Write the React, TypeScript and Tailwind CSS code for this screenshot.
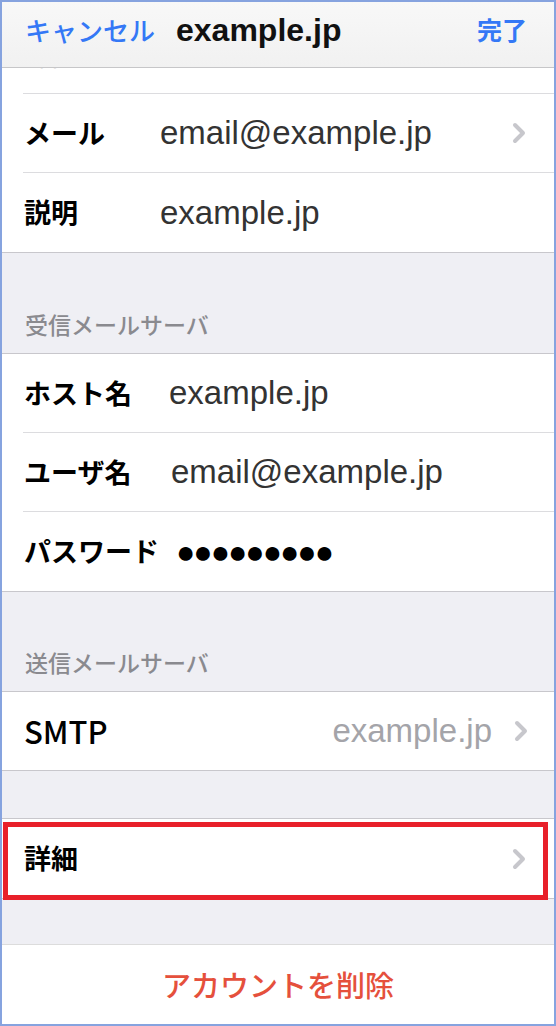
const jp = { fontFamily: '"Noto Sans CJK JP", sans-serif' };
const latin = { fontFamily: '"Liberation Sans", Arial, sans-serif' };

function Chevron() {
  return (
    <svg width="16" height="24" viewBox="0 0 16 24" className="shrink-0">
      <path
        d="M4 4 L12 12 L4 20"
        fill="none"
        stroke="#c7c7cc"
        strokeWidth="4"
        strokeLinecap="round"
        strokeLinejoin="round"
      />
    </svg>
  );
}

type RowProps = {
  label: string;
  labelW: number;
  value?: React.ReactNode;
  chevron?: boolean;
  last?: boolean;
};

const labelWidths: Record<number, string> = {
  136: "w-[136px]",
  145: "w-[145px]",
  147: "w-[147px]",
  152: "w-[152px]",
};

function Row({ label, labelW, value, chevron, last }: RowProps) {
  return (
    <div className="bg-white pl-[21px]">
      <div
        className={
          "flex h-[79px] items-center pl-[1px] pr-[27px] " +
          (last ? "" : "border-b border-[#dcdcdf]")
        }
      >
        <div
          className={"shrink-0 text-[27px] font-bold text-black " + labelWidths[labelW]}
          style={jp}
        >
          {label}
        </div>
        <div className="flex-1 text-[33px] text-[#333]" style={latin}>
          {value}
        </div>
        {chevron && <Chevron />}
      </div>
    </div>
  );
}

function SectionGap({ h, title }: { h: string; title?: string }) {
  return (
    <div className={"flex items-end bg-[#efeff4] pl-[23px] pb-[12px] " + h}>
      {title && (
        <span className="text-[23px] font-medium text-[#8a8a8f]" style={jp}>
          {title}
        </span>
      )}
    </div>
  );
}

export default function App() {
  return (
    <div className="h-[1026px] w-[556px] overflow-hidden border-2 border-[#86a3df] bg-white">
      {/* nav bar */}
      <div className="flex h-[66px] items-center border-b border-[#c6c6c8] bg-gradient-to-b from-[#f8f8f8] to-[#f1f1f1] pb-[10px] pl-[23px] pr-[27px]">
        <span className="text-[26px] font-medium text-[#3478f6]" style={jp}>
          キャンセル
        </span>
        <span className="ml-[21px] text-[32px] font-bold text-[#111]" style={latin}>
          example.jp
        </span>
        <span className="ml-auto text-[25px] font-bold text-[#3478f6]" style={jp}>
          完了
        </span>
      </div>

      {/* account group */}
      <div className="border-b border-[#c8c7cc] bg-white">
        <div className="bg-white pl-[21px]">
          <div className="h-[26px] overflow-hidden border-b border-[#dcdcdf]">
            <div className="-mt-[27px] pl-[9px] text-[27px] leading-none text-[#9a9a9a]" style={jp}>
              名前
            </div>
          </div>
        </div>
        <Row label="メール" labelW={136} value="email@example.jp" chevron />
        <Row label="説明" labelW={136} value="example.jp" last />
      </div>

      <SectionGap h="h-[100px]" title="受信メールサーバ" />

      <div className="border-y border-[#c8c7cc] bg-white">
        <Row label="ホスト名" labelW={145} value="example.jp" />
        <Row label="ユーザ名" labelW={147} value="email@example.jp" />
        <Row
          label="パスワード"
          labelW={152}
          value={
            <span className="text-[32px] tracking-[-2px] text-black" style={latin}>
              ●●●●●●●●●
            </span>
          }
          last
        />
      </div>

      <SectionGap h="h-[99px]" title="送信メールサーバ" />

      <div className="border-y border-[#c8c7cc] bg-white">
        <div className="flex h-[78px] items-center pl-[22px] pr-[25px]">
          <span className="text-[31px] font-medium text-black" style={jp}>
            SMTP
          </span>
          <span className="ml-auto mr-[21px] text-[33px] text-[#a4a4a9]" style={latin}>
            example.jp
          </span>
          <Chevron />
        </div>
      </div>

      <SectionGap h="h-[47px]" />

      <div className="relative border-y border-[#c8c7cc] bg-white">
        <Row label="詳細" labelW={136} chevron last />
        <div className="absolute left-[1px] top-[3px] h-[78px] w-[545px] border-[5px] border-[#e8202a]" />
      </div>

      <SectionGap h="h-[45px]" />

      <div className="flex h-[80px] items-center justify-center border-t border-[#dcdcdc] bg-white">
        <span className="text-[29px] font-medium text-[#e5503c]" style={jp}>
          アカウントを削除
        </span>
      </div>
    </div>
  );
}
